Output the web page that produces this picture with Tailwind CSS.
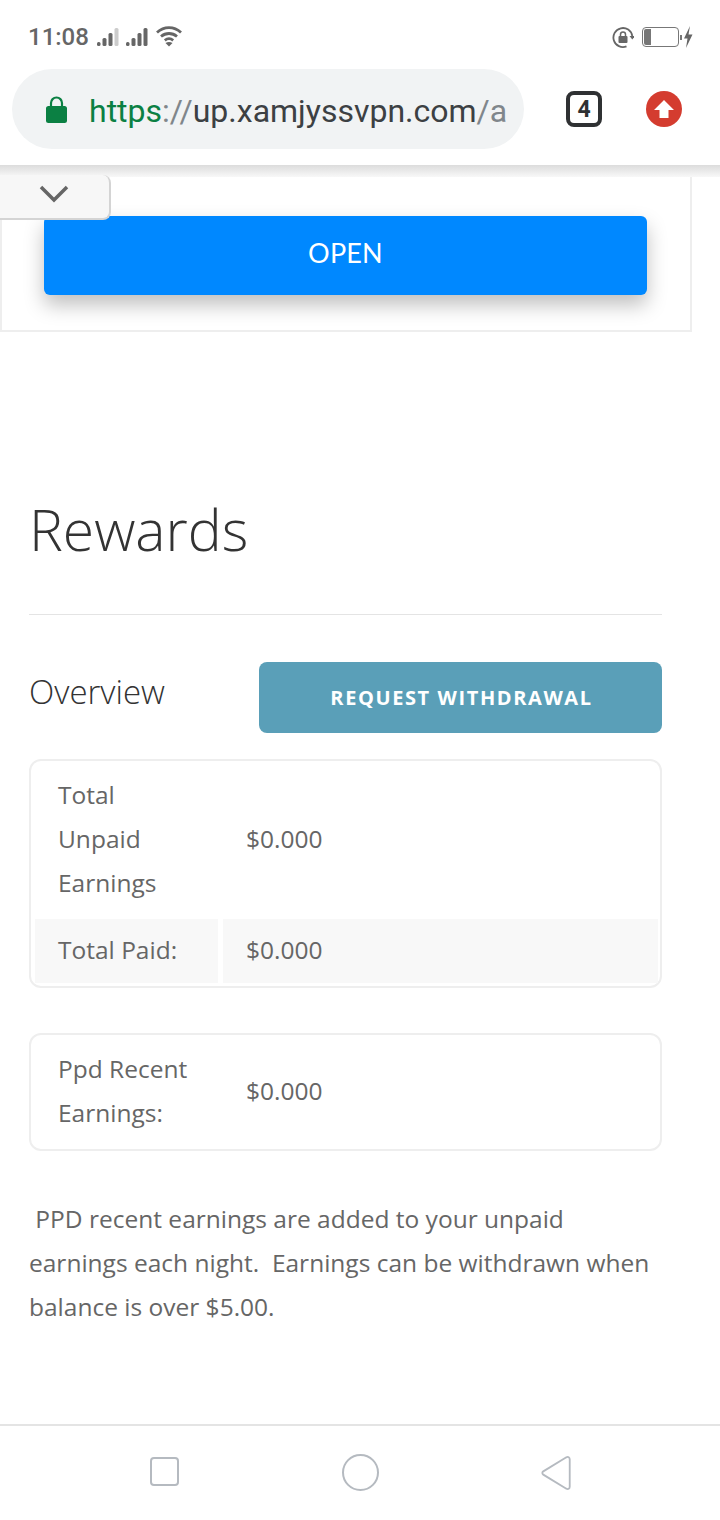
<!DOCTYPE html>
<html lang="en">

<head>
  <meta charset="UTF-8">
  <title>Rewards</title>
  <script src="https://cdn.jsdelivr.net/npm/@tailwindcss/browser@4"></script>
</head>

<body class="bg-white">
  <div class="w-[720px] h-[1520px] flex flex-col overflow-hidden font-['Open_Sans',sans-serif]">

    <!-- Status bar -->
    <div class="h-[69px] shrink-0 flex items-start justify-between pt-[22px] pl-[28px] pr-[27px] text-[#666666]">
      <div class="flex items-center gap-[8px] h-[30px]">
        <span class="font-['Roboto',sans-serif] font-medium text-[24px] leading-[30px]">11:08</span>
        <svg width="24" height="20" viewBox="0 0 24 20" fill="#666666">
          <rect x="0" y="15" width="3.500" height="4" rx="1.500" />
          <rect x="5.500" y="11" width="4" height="8" rx="1.500" />
          <rect x="11.500" y="6" width="4" height="13" rx="1.500" />
          <rect x="17.500" y="1" width="4" height="18" rx="1.500" fill="#cccccc" />
        </svg>
        <svg class="-ml-[3px]" width="24" height="20" viewBox="0 0 24 20" fill="#666666">
          <rect x="0" y="15" width="3.500" height="4" rx="1.500" />
          <rect x="5.500" y="11" width="4" height="8" rx="1.500" />
          <rect x="11.500" y="6" width="4" height="13" rx="1.500" />
          <rect x="17.500" y="1" width="4" height="18" rx="1.500" />
        </svg>
        <svg class="-ml-[3px] -mt-[3px]" width="28" height="22" viewBox="0 0 28 22" fill="none" stroke="#666666" stroke-width="2.800">
          <path d="M2 7.500C9 1 19 1 26 7.500" />
          <path d="M6 11.500C10.800 7.500 17.200 7.500 22 11.500" />
          <path d="M9.800 15.300C12.300 13.300 15.700 13.300 18.200 15.300" />
          <path d="M14 21.500L10.500 18C12.800 16.500 15.200 16.500 17.500 18Z" fill="#666666" stroke="none" />
        </svg>
      </div>
      <div class="flex items-center gap-[8px] h-[30px]">
        <svg width="22" height="22" viewBox="0 0 22 22" fill="none">
          <path d="M14.500 20.300A9.500 9.500 0 1 1 20.300 10" stroke="#666666" stroke-width="1.800" />
          <path d="M17.500 10H23L20.300 13.500Z" fill="#666666" />
          <rect x="6.500" y="10" width="9" height="7" rx="1" fill="#666666" />
          <path d="M8.500 10.500V8.500a2.500 2.500 0 0 1 5 0v2" stroke="#666666" stroke-width="1.500" />
        </svg>
        <div class="flex items-center">
          <div class="w-[37px] h-[20px] rounded-[4px] border border-[#777777] p-[1px]">
            <div class="w-[7px] h-full rounded-l-[2px] bg-[#777777]"></div>
          </div>
          <div class="w-[2px] h-[5px] ml-[1px] bg-[#777777]"></div>
          <svg class="ml-[1px]" width="10" height="22" viewBox="0 0 10 22" fill="#666666">
            <path d="M7 0L1 12.500H4.500L3 22L9.500 8.500H5.500Z" />
          </svg>
        </div>
      </div>
    </div>

    <!-- Browser toolbar -->
    <div class="h-[96px] shrink-0 flex items-start pl-[12px]">
      <div class="w-[512px] h-[80px] rounded-full bg-[#f1f3f4] flex items-center pl-[34px] overflow-hidden font-['Roboto',sans-serif] text-[32px] whitespace-nowrap">
        <svg class="shrink-0" width="21" height="27" viewBox="0 0 21 27" fill="#0b8043">
          <path d="M3 10H18.500A2.500 2.500 0 0 1 21 12.500V24.500A2.500 2.500 0 0 1 18.500 27H2.500A2.500 2.500 0 0 1 0 24.500V12.500A2.500 2.500 0 0 1 3 10Z" />
          <path d="M5 11V7a5.500 5.500 0 0 1 11 0v4" fill="none" stroke="#0b8043" stroke-width="2.200" />
        </svg>
        <div class="ml-[22px] pt-[3px]"><span class="text-[#0b8043]">https</span><span class="text-[#80868b]">://</span><span class="text-[#3c4043]">up.xamjyssvpn.com</span><span class="text-[#80868b]">/a</span></div>
      </div>
      <div class="mt-[22px] ml-[42px] w-[36px] h-[36px] rounded-[8px] border-4 border-[#2f3133] flex items-center justify-center font-['Liberation_Sans_Narrow','Roboto',sans-serif] font-bold text-[23px] leading-none text-[#2f3133]">4</div>
      <div class="mt-[22px] ml-[44px] w-[36px] h-[36px] rounded-full bg-[#d43c2f] flex items-center justify-center">
        <svg width="22" height="20" viewBox="0 0 22 20" fill="#ffffff">
          <path d="M11 1L21 11H15.500V19H6.500V11H1Z" />
        </svg>
      </div>
    </div>

    <!-- Page content -->
    <div class="relative flex-1">
      <div class="absolute top-0 left-0 w-full h-[12px] bg-linear-to-b from-[#dcdcdc] to-[#f8f8f8]"></div>

      <!-- Collapse tab -->
      <div class="absolute top-[10px] left-0 w-[111px] h-[45px] rounded-br-[8px] rounded-tr-[8px] bg-[#f7f7f7] border-r-2 border-b-2 border-[#d4d4d4] flex items-center justify-center z-10">
        <svg class="-mt-[5px] -ml-[2px]" width="30" height="18" viewBox="0 0 30 18" fill="none" stroke="#666666" stroke-width="3.500">
          <path d="M2 2L15 15L28 2" />
        </svg>
      </div>

      <!-- Ad box -->
      <div class="pt-[12px]">
        <div class="w-[692px] h-[155px] border-2 border-t-0 border-[#eeeeee] pt-[39px] pl-[42px]">
          <div class="w-[603px] h-[79px] rounded-[6px] bg-[#0088ff] shadow-[0_10px_20px_rgba(0,0,0,0.25)] flex items-center justify-center font-['Lato',sans-serif] text-[27px] tracking-[0.2px] text-white"><span class="-mt-[4px]">OPEN</span></div>
        </div>
      </div>

      <!-- Rewards -->
      <div class="pl-[29px] w-[662px]">
        <h1 class="mt-[155px] text-[57px] leading-[84px] font-light text-[#333333]">Rewards</h1>
        <div class="mt-[43px] h-[1px] bg-[#e4e4e4]"></div>

        <div class="mt-[47px] flex items-start justify-between">
          <h2 class="text-[33px] leading-[59px] font-light text-[#333333]">Overview</h2>
          <div class="w-[403px] h-[71px] rounded-[8px] bg-[#5a9fb8] flex items-center justify-center pl-[2px] text-[20px] font-bold tracking-[1.600px] text-white">REQUEST WITHDRAWAL</div>
        </div>

        <div class="mt-[26px] h-[229px] rounded-[12px] border-2 border-[#eeeeee] pl-[4px] pr-[2px] pt-[12px] text-[24.500px] leading-[44px] text-[#666666]">
          <div class="grid grid-cols-[183px_435px] gap-x-[5px] items-center">
            <div class="pl-[23px] pr-[30px]">Total Unpaid Earnings</div>
            <div class="pl-[23px]">$0.000</div>
          </div>
          <div class="mt-[14px] grid grid-cols-[183px_435px] gap-x-[5px] h-[64px] items-stretch">
            <div class="pl-[23px] pb-[2px] bg-[#f8f8f8] flex items-center">Total Paid:</div>
            <div class="pl-[23px] pb-[2px] bg-[#f8f8f8] flex items-center">$0.000</div>
          </div>
        </div>

        <div class="mt-[45px] h-[118px] rounded-[12px] border-2 border-[#eeeeee] pl-[4px] pr-[2px] pt-[12px] text-[24.500px] leading-[44px] text-[#666666]">
          <div class="grid grid-cols-[183px_435px] gap-x-[5px] items-center">
            <div class="pl-[23px]">Ppd Recent Earnings:</div>
            <div class="pl-[23px]">$0.000</div>
          </div>
        </div>

        <p class="mt-[46px] w-[633px] text-[24.500px] leading-[44px] text-[#666666]">&nbsp;PPD recent earnings are added to your unpaid earnings each night.&nbsp; Earnings can be withdrawn when balance is over $5.00.</p>
      </div>
    </div>

    <!-- Navigation bar -->
    <div class="h-[96px] shrink-0 border-t-2 border-[#e4e4e4] flex items-start pt-[30px] pl-[150px]">
      <div class="w-[29px] h-[29px] mt-[1px] rounded-[4px] border-2 border-[#b5bac0]"></div>
      <div class="w-[37px] h-[37px] -mt-[2px] ml-[163px] rounded-full border-2 border-[#b5bac0]"></div>
      <svg class="-mt-[1px] ml-[162px]" width="31" height="36" viewBox="0 0 34 38" fill="none" stroke="#b5bac0" stroke-width="2">
        <path d="M2.500 17.200L27.800 1.800C29.800 .8 31.500 1.800 31.500 4V34C31.500 36.200 29.800 37.200 27.800 36.200L2.500 20.800C1.100 19.800 1.100 18.200 2.500 17.200Z" />
      </svg>
    </div>
  </div>
</body>

</html>
